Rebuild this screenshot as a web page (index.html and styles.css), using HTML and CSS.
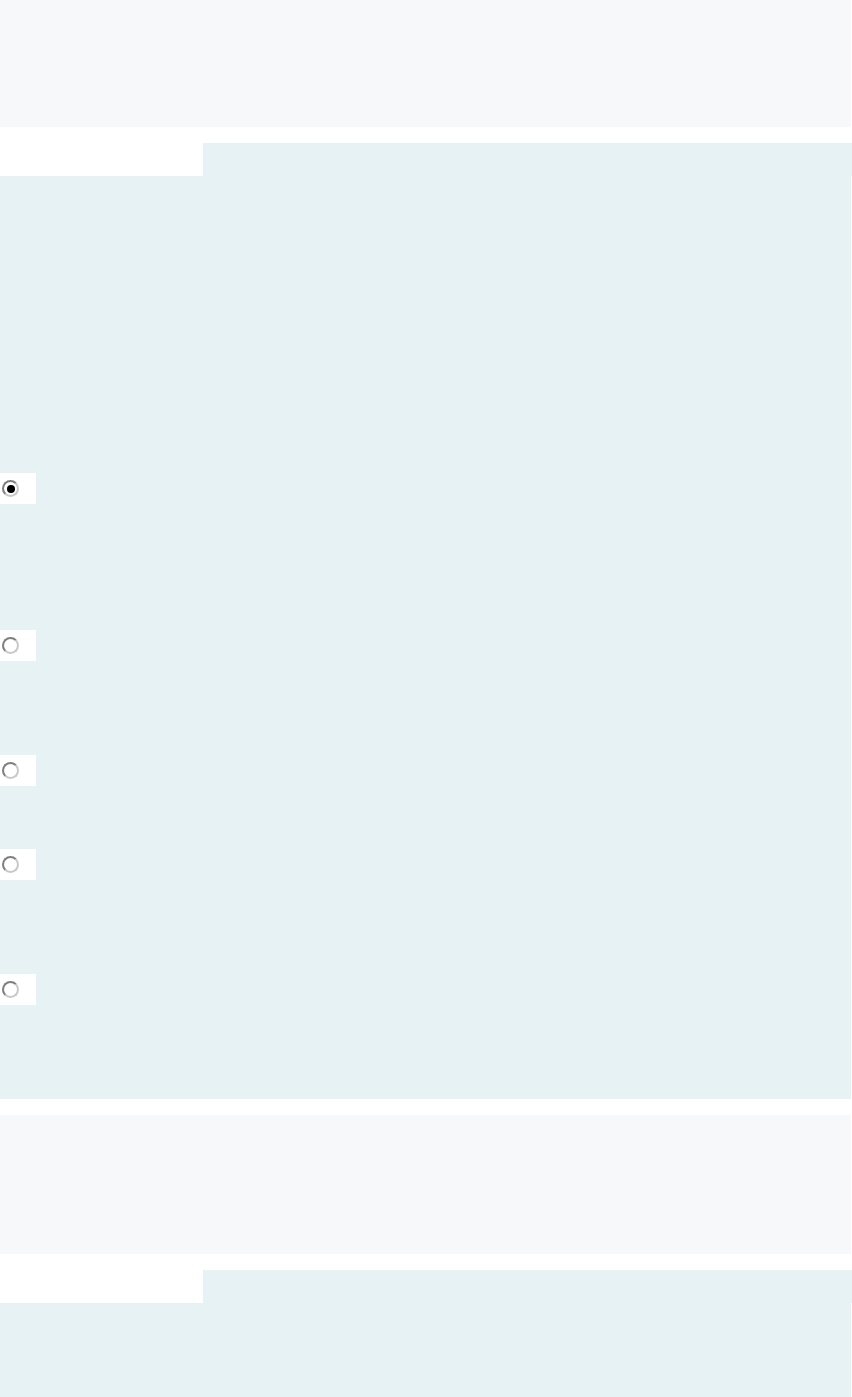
FILE: index.html
```html
<!DOCTYPE html>
<html lang="en">
<head>
    <meta charset="UTF-8">
    <meta name="viewport" content="width=device-width, initial-scale=1.0">
    <title>Options</title>
    <link rel="stylesheet" href="styles.css">
</head>
<body>

<div class="header"></div>

<div class="tabs">
    <div class="tab-blank"></div>
    <div class="tab-fill"></div>
</div>

<form class="panel">
    <div class="option">
        <label class="choice"><input type="radio" name="opt" checked></label>
        <div class="desc lines-4"></div>
    </div>
    <div class="option">
        <label class="choice"><input type="radio" name="opt"></label>
        <div class="desc lines-3"></div>
    </div>
    <div class="option">
        <label class="choice"><input type="radio" name="opt"></label>
        <div class="desc lines-2"></div>
    </div>
    <div class="option">
        <label class="choice"><input type="radio" name="opt"></label>
        <div class="desc lines-3"></div>
    </div>
    <div class="option">
        <label class="choice"><input type="radio" name="opt"></label>
        <div class="desc lines-3"></div>
    </div>
</form>

<div class="header second"></div>

<div class="tabs">
    <div class="tab-blank"></div>
    <div class="tab-fill"></div>
</div>

<div class="panel short"></div>

</body>
</html>
```
FILE: styles.css
```css
body {
    font-family: "Liberation Sans", Arial, sans-serif;
    background-color: #ffffff;
    margin: 0;
    padding: 0;
    width: 852px;
}

.header {
    width: 851px;
    height: 127px;
    background-color: #f7f8fa;
}

.header.second {
    height: 139px;
    margin-top: 16px;
}

.tabs {
    display: flex;
    height: 33px;
    margin-top: 16px;
}

.tab-blank {
    width: 203px;
}

.tab-fill {
    flex: 1;
    background-color: #e6f2f4;
}

.panel {
    width: 851px;
    margin: 0;
    padding-top: 297px;
    background-color: #e6f2f4;
    display: flex;
    flex-direction: column;
}

.panel.short {
    padding-top: 0;
    height: 94px;
}

.choice {
    display: flex;
    align-items: center;
    width: 36px;
    height: 31px;
    background-color: #ffffff;
}

.choice input {
    appearance: none;
    -webkit-appearance: none;
    box-sizing: border-box;
    width: 17px;
    height: 17px;
    margin: 0 0 0 2px;
    border-radius: 50%;
    border: 2px solid #7f7f7f;
    border-right-color: #c8c8c8;
    border-bottom-color: #c8c8c8;
    background-color: #ffffff;
    display: flex;
    align-items: center;
    justify-content: center;
}

.choice input:checked::after {
    content: "";
    width: 8px;
    height: 8px;
    border-radius: 50%;
    background-color: #000000;
}

.desc {
    height: 31px;
}

.lines-2 {
    height: 63px;
}

.lines-3 {
    height: 94px;
}

.lines-4 {
    height: 126px;
}
```
